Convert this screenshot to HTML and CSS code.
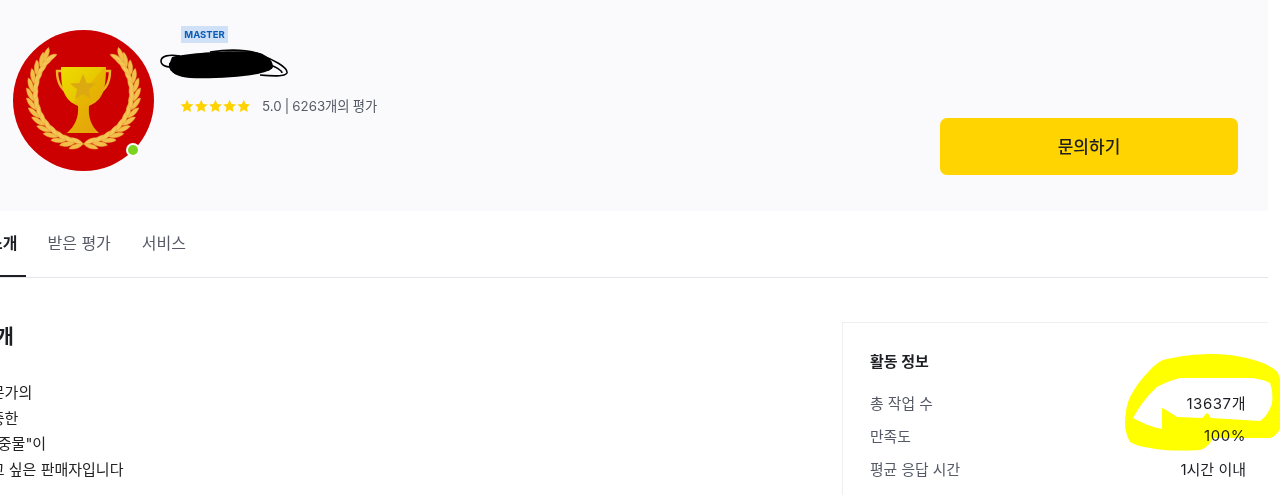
FILE: index.html
```html
<!DOCTYPE html>
<html lang="ko">
<head>
<meta charset="utf-8">
<title>전문가 프로필</title>
<link rel="stylesheet" href="styles.css">
</head>
<body>
<div class="page">
  <header class="hero">
    <div class="avatar">
      <svg class="avatar-art" viewBox="0 0 141 141" aria-hidden="true">
        <defs>
          <linearGradient id="cup" x1="0.1" y1="0.05" x2="0.75" y2="0.9">
            <stop offset="0" stop-color="#ecd900"/>
            <stop offset="0.45" stop-color="#e8c800"/>
            <stop offset="0.46" stop-color="#e6b800"/>
            <stop offset="1" stop-color="#e6a50c"/>
          </linearGradient>
          <g id="pair">
            <path d="M73 114 C69 109 64 108 59 108.5 C60 112 66 115 73 114Z" fill="#f4c656" stroke="#e8ad3a" stroke-width=".5"/>
            <path d="M73 114 C69 119 64 120 59 119.5 C60 116 66 113 73 114Z" fill="#f2bf4a" stroke="#e8ad3a" stroke-width=".5"/>
          </g>
          <g id="branch">
            <use href="#pair" transform="rotate(3 71 63)"/>
            <use href="#pair" transform="rotate(13 71 63)"/>
            <use href="#pair" transform="rotate(23 71 63)"/>
            <use href="#pair" transform="rotate(33 71 63)"/>
            <use href="#pair" transform="rotate(43 71 63)"/>
            <use href="#pair" transform="rotate(53 71 63)"/>
            <use href="#pair" transform="rotate(63 71 63)"/>
            <use href="#pair" transform="rotate(73 71 63)"/>
            <use href="#pair" transform="rotate(83 71 63)"/>
            <use href="#pair" transform="rotate(93 71 63)"/>
            <use href="#pair" transform="rotate(103 71 63)"/>
            <use href="#pair" transform="rotate(113 71 63)"/>
            <use href="#pair" transform="rotate(123 71 63)"/>
            <use href="#pair" transform="rotate(130 71 63)"/>
          </g>
        </defs>
        <circle cx="70.5" cy="70.5" r="70.5" fill="#cc0000"/>
        <use href="#branch"/>
        <use href="#branch" transform="matrix(-1 0 0 1 141 0)"/>
        <path d="M49 41 H44 C44 54 50 62 60 66 M92 41 H97 C97 54 91 62 81 66" fill="none" stroke="#eeb52c" stroke-width="2.4"/>
        <path d="M48 37 H93 C93 60 90 70 76 76 C75 87 78 96 86 103 H54 C62 96 66 87 65 76 C51 70 48 60 48 37Z" fill="url(#cup)"/>
        <path d="M70 44 L73.7 53 L83 53.6 L75.8 59.6 L78 69 L70 64 L62 69 L64.2 59.6 L57 53.6 L66.3 53Z" fill="#dcaa10"/>
      </svg>
      <span class="online"></span>
    </div>
    <div class="info">
      <span class="grade">MASTER</span>
      <svg class="scribble" viewBox="0 0 130 30" aria-hidden="true">
        <path d="M12 8 C30 4 70 1 95 3 C105 5 113 10 113 18 C110 27 60 30 30 29 C18 28 9 24 9 16Z" fill="#000"/>
        <path d="M20 7 C9 5 1 7 1 12 C1 18 10 19 22 18 M10 14 C8 21 16 26 30 27 M100 6 C112 10 128 18 127 24 C125 28 112 27 100 26 M108 15 C116 18 122 21 122 24 M50 3 C70 0 90 1 103 6" fill="none" stroke="#000" stroke-width="1.6"/>
      </svg>
      <div class="rating">
        <svg class="stars" viewBox="0 0 72 14" aria-hidden="true">
          <defs><path id="star" d="M7 .8 L8.9 4.9 L13.4 5.4 L10.1 8.4 L11 12.9 L7 10.7 L3 12.9 L3.9 8.4 L.6 5.4 L5.1 4.9Z" fill="#ffd200"/></defs>
          <use href="#star"/>
          <use href="#star" x="14.2"/>
          <use href="#star" x="28.4"/>
          <use href="#star" x="42.6"/>
          <use href="#star" x="56.8"/>
        </svg>
        <span class="score">5.0 | 6263개의 평가</span>
      </div>
    </div>
    <button class="contact" type="button">문의하기</button>
  </header>

  <nav class="tabs">
    <a class="tab tab-active">소개</a>
    <a class="tab">받은 평가</a>
    <a class="tab">서비스</a>
  </nav>

  <main class="content">
    <section class="intro">
      <h2 class="intro-title">소개</h2>
      <p class="intro-line">전문가의</p>
      <p class="intro-line">소중한</p>
      <p class="intro-line">"소중물"이</p>
      <p class="intro-line">보고 싶은 판매자입니다</p>
    </section>
    <aside class="card">
      <h3 class="card-title">활동 정보</h3>
      <dl class="stats">
        <div class="stat"><dt>총 작업 수</dt><dd class="num">13637개</dd></div>
        <div class="stat"><dt>만족도</dt><dd class="num">100%</dd></div>
        <div class="stat"><dt>평균 응답 시간</dt><dd>1시간 이내</dd></div>
      </dl>
    </aside>
  </main>
</div>
<svg class="marker" viewBox="0 0 160 100" aria-hidden="true">
  <path fill-rule="evenodd" fill="#ffff00" d="M5 73 C5 62 6 52 10 43 C15 33 22 24 30 16 C35 11 38 8 43 6 C60 2 75 0 93 0 C112 0 130 4 143 9 C150 12 155 15 158 19 L160 25 L160 75 C157 80 154 83 150 84 L93 84 C90 90 86 94 80 96 C62 97 45 97 30 94 C22 93 15 91 10 88 C7 83 6 78 5 73Z M13 64 C22 69 32 73 42 75 L42 54 C47 56 52 60 57 63 L82 64 C84 63 85 60 87 59 C89 60 90 63 91 64 L140 67 C146 63 150 56 152 49 C153 42 152 35 150 29 C145 26 136 24 127 24 L60 24 C52 26 44 29 37 33 C27 42 19 53 13 64Z"/>
</svg>
</body>
</html>
```
FILE: styles.css
```css
* { box-sizing: border-box; }
html, body { margin: 0; height: 495px; overflow: hidden; background: #fff; }
body {
  position: relative;
  font-family: Inter, "Noto Sans CJK KR", sans-serif;
  color: #1d1f24;
}
.page { width: 1268px; height: 495px; overflow: hidden; }

.hero {
  display: flex;
  align-items: flex-start;
  height: 211px;
  padding: 26px 30px 0 13px;
  background: #fafafc;
}
.avatar { position: relative; width: 141px; height: 141px; margin-top: 4px; flex: none; }
.avatar-art { display: block; width: 141px; height: 141px; }
.online {
  position: absolute;
  right: 14px;
  bottom: 14px;
  width: 14px;
  height: 14px;
  border: 2px solid #fff;
  border-radius: 50%;
  background: #7ed321;
}
.info { display: flex; flex-direction: column; align-items: flex-start; margin-left: 27px; }
.grade {
  height: 17px;
  width: 47px;
  padding: 0;
  background: #cfe0f7;
  color: #0b5cb5;
  font-size: 9.5px;
  font-weight: 700;
  line-height: 17px;
  text-align: center;
}
.scribble { display: block; width: 130px; height: 30px; margin: 6px 0 0 -21px; }
.rating { display: flex; align-items: center; margin-top: 19px; }
.stars { display: block; width: 72px; height: 14px; margin-left: -1px; }
.score { margin-left: 10px; font-size: 13.3px; word-spacing: -.6px; color: #555a66; line-height: 16px; }
.contact {
  width: 298px;
  height: 57px;
  margin: 92px 0 0 auto;
  padding: 0 0 2px;
  border: 0;
  border-radius: 7px;
  background: #ffd400;
  color: #1d1f24;
  font: 500 17px Inter, "Noto Sans CJK KR", sans-serif;
}

.tabs {
  display: flex;
  gap: 13px;
  height: 67px;
  margin-left: -21px;
  border-bottom: 1px solid #e4e5ea;
}
.tab {
  height: 66px;
  padding: 0 9px;
  font-size: 16px;
  line-height: 65px;
  color: #555a66;
}
.tab-active { margin-right: -1px; color: #1d1f24; font-weight: 700; border-bottom: 2px solid #1d1f24; }

.content { display: flex; justify-content: space-between; align-items: flex-start; padding-top: 44px; }
.intro { margin-left: -23px; padding-top: 1px; }
.intro-title { margin: 0 0 29px; font-size: 20px; font-weight: 700; line-height: 28px; }
.intro-line { margin: 0; font-size: 15px; line-height: 25.7px; color: #222; white-space: nowrap; }

.card {
  width: 426px;
  height: 200px;
  padding: 28px 22px 0 27px;
  border: 1px solid #eeeff2;
  border-right: 0;
}
.card-title { margin: 0 0 13px; font-size: 15px; font-weight: 700; line-height: 22px; }
.stats { margin: 0; display: flex; flex-direction: column; }
.stat { display: flex; justify-content: space-between; height: 33px; align-items: center; font-size: 15px; }
.stat dt { color: #555a66; font-size: 14.8px; }
.stat dd { margin: 0; color: #1d1f24; }
.stat .num { letter-spacing: .55px; }

.marker {
  position: absolute;
  left: 1120px;
  top: 354px;
  width: 160px;
  height: 100px;
  mix-blend-mode: multiply;
  pointer-events: none;
}
```
